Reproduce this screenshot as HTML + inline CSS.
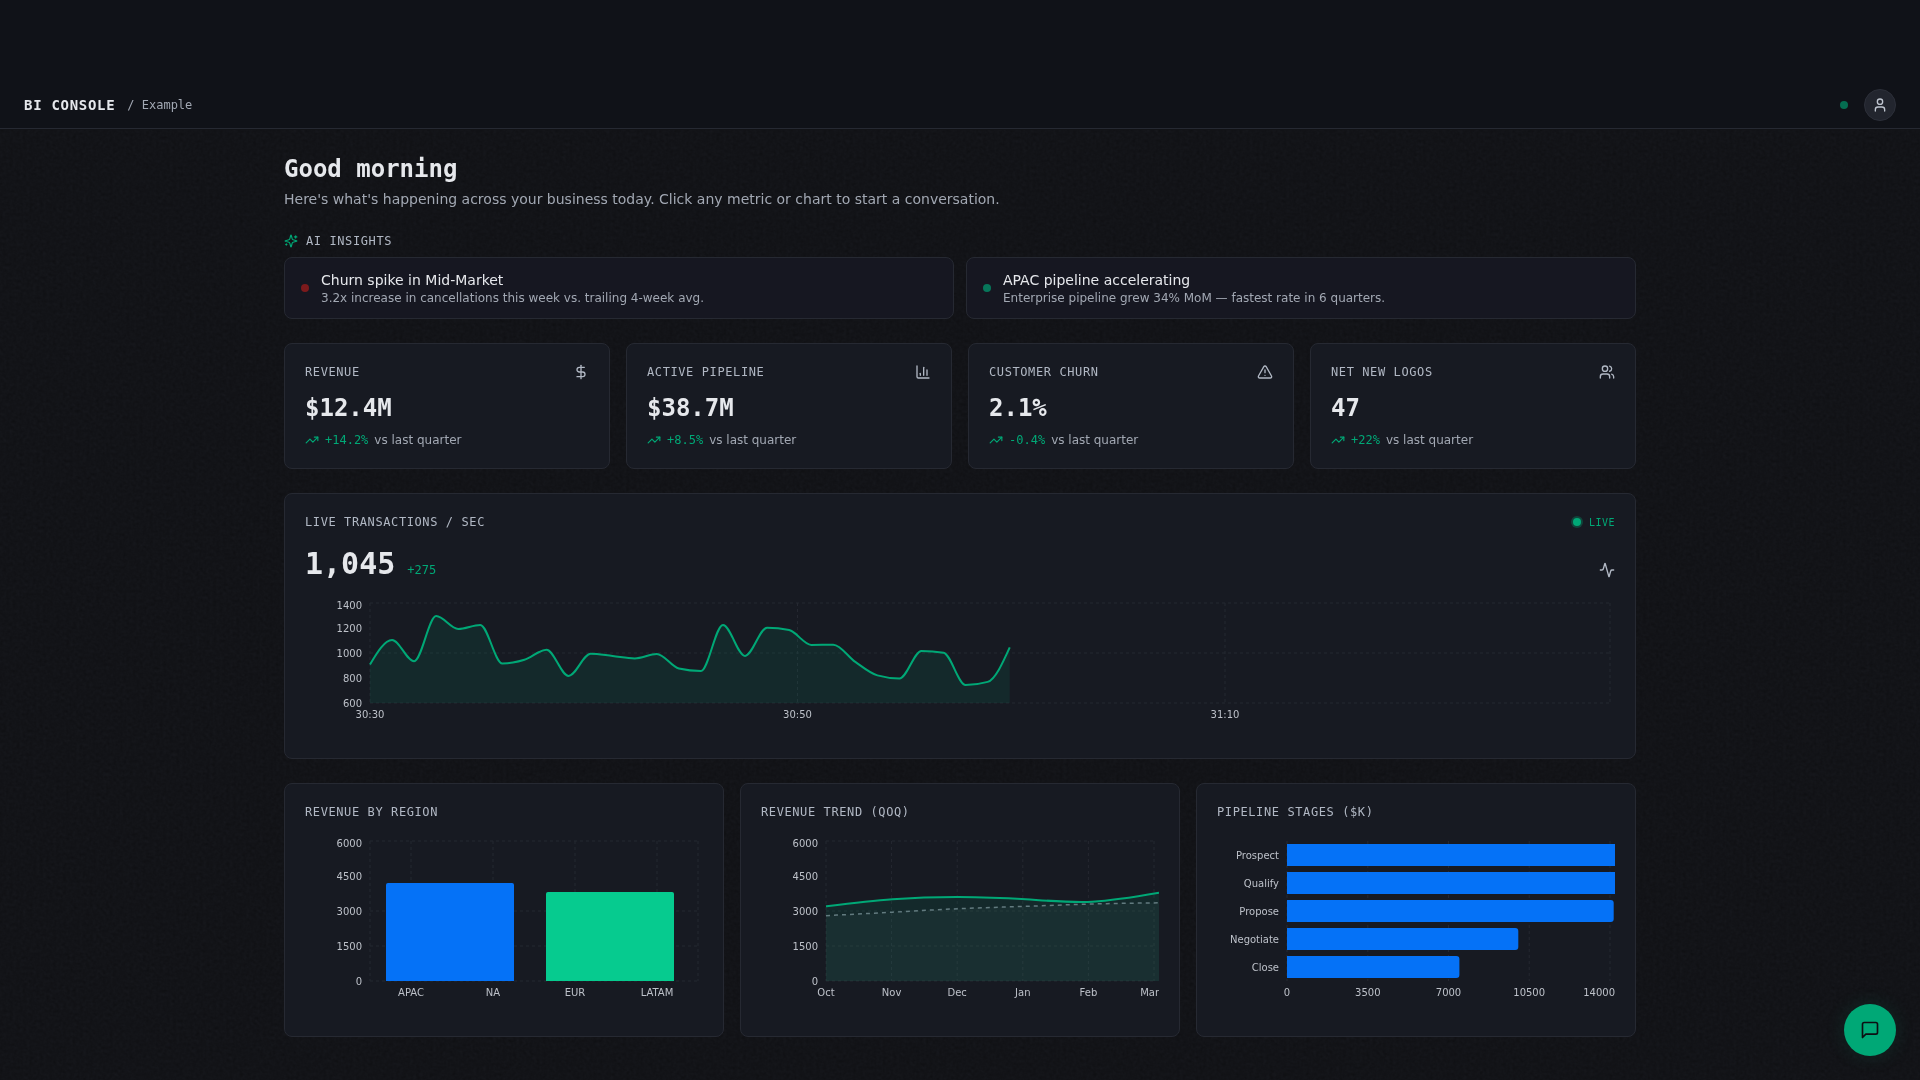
<!DOCTYPE html>
<html lang="en"><head><meta charset="utf-8"><title>BI Console</title>
<style>
*{box-sizing:border-box;margin:0;padding:0}
html,body{width:1920px;height:1080px;overflow:hidden}
body{background:#121317;color:#e6e8ec;font-family:"DejaVu Sans","Liberation Sans",sans-serif;font-size:14px;line-height:20px;position:relative}
.mono{font-family:"DejaVu Sans Mono","Liberation Mono",monospace}
header{will-change:transform;position:absolute;left:0;top:0;width:1920px;height:129px;background:#101218;border-bottom:1px solid #262932}
.brand{position:absolute;left:24px;top:95px;height:20px;display:flex;align-items:center}
.brand b{font-family:"DejaVu Sans Mono","Liberation Mono",monospace;font-size:14px;font-weight:700;letter-spacing:.05em;color:#e6e8ec}
.brand span{font-family:"DejaVu Sans Mono","Liberation Mono",monospace;font-size:12px;color:#a2a8b3;margin-left:12px}
.status{position:absolute;left:1840px;top:101px;width:8px;height:8px;border-radius:50%;background:#056d51}
.avatar{position:absolute;left:1864px;top:89px;width:32px;height:32px;border-radius:50%;background:#22252e;border:1px solid #2c2f39;display:flex;align-items:center;justify-content:center;color:#bfc5cf}
main{will-change:transform;position:absolute;left:284px;top:129px;width:1352px;padding-top:24px}
h1{font-family:"DejaVu Sans Mono","Liberation Mono",monospace;font-size:24px;line-height:32px;font-weight:700;color:#e6e8ec}
.sub{margin-top:4px;font-size:14px;line-height:20px;color:#a2a8b3}
.sect{margin-top:24px;display:flex;align-items:center;height:16px;color:#b1b8c4;font-family:"DejaVu Sans Mono","Liberation Mono",monospace;font-size:12px;line-height:16px;letter-spacing:.05em}
.sect svg{margin-right:8px;color:#00a876}
.card{background:#171a22;border:1px solid #262932;border-radius:8px}
.insights{margin-top:8px;display:flex;gap:12px}
.insight{flex:1;height:62px;padding:0 16px;display:flex;align-items:center;border-radius:8px;background:#161721}
.dot{width:8px;height:8px;border-radius:50%;margin-right:12px;flex:none}
.insight .t{font-size:14px;line-height:20px;color:#e6e8ec}
.insight .d{font-size:12px;line-height:16px;color:#a2a8b3}
.kpis{margin-top:24px;display:flex;gap:16px}
.kpi{flex:1;height:126px;padding:20px}
.kpi .top{display:flex;justify-content:space-between;align-items:center;height:16px;color:#b1b8c4}
.lab{font-family:"DejaVu Sans Mono","Liberation Mono",monospace;font-size:12px;line-height:16px;letter-spacing:.05em;color:#b1b8c4;text-transform:uppercase}
.kpi .val{margin-top:12px;font-family:"DejaVu Sans Mono","Liberation Mono",monospace;font-size:24px;line-height:32px;font-weight:700;color:#e6e8ec}
.kpi .tr{margin-top:8px;display:flex;align-items:center;height:16px;font-size:12px;line-height:16px;color:#a2a8b3}
.kpi .tr svg{color:#00a876;margin-right:6px}
.kpi .tr b{font-family:"DejaVu Sans Mono","Liberation Mono",monospace;font-weight:400;color:#00a876;margin-right:6px}
.live{margin-top:24px;height:266px;padding:20px;position:relative}
.live .head{display:flex;justify-content:space-between;align-items:center;height:16px}
.livetag{display:flex;align-items:center;font-family:"DejaVu Sans Mono","Liberation Mono",monospace;font-size:10px;line-height:16px;letter-spacing:.05em;color:#00a876}
.livetag i{display:block;width:8px;height:8px;border-radius:50%;background:#00a876;box-shadow:0 0 0 2px rgba(0,168,118,.3);margin-right:8px}
.livetag em{font-style:normal;position:relative;top:1px}
.live .num{margin-top:16px;height:36px;display:flex;align-items:baseline;justify-content:flex-start}
.live .num b{font-family:"DejaVu Sans Mono","Liberation Mono",monospace;font-size:30px;line-height:36px;font-weight:700;color:#e6e8ec}
.live .num span{font-family:"DejaVu Sans Mono","Liberation Mono",monospace;font-size:12px;color:#00a876;margin-left:12px}
.live .act{position:absolute;right:20px;top:68px;color:#b1b8c4;height:16px}
.chart{display:block}
.chart text{font-family:"DejaVu Sans","Liberation Sans",sans-serif;font-size:10px;fill:#bdc1c9}
.row3{margin-top:24px;display:flex;gap:16px}
.c3{flex:1;height:254px;padding:20px}
.c3 .chart{margin-top:16px}
.noise{position:absolute;left:0;top:130px;width:1920px;height:950px;opacity:.2;mix-blend-mode:overlay;pointer-events:none}
.fab{position:absolute;left:1844px;top:1004px;width:52px;height:52px;border-radius:50%;background:#00a876;display:flex;align-items:center;justify-content:center;color:#0d0f13;box-shadow:0 0 20px rgba(0,168,118,.15)}
</style></head><body>
<header>
  <div class="brand"><b>BI CONSOLE</b><span>/ Example</span></div>
  <div class="status"></div>
  <div class="avatar"><svg width="16" height="16" viewBox="0 0 24 24" fill="none" stroke="currentColor" stroke-width="2" stroke-linecap="round" stroke-linejoin="round" ><path d="M19 21v-2a4 4 0 0 0-4-4H9a4 4 0 0 0-4 4v2"/><circle cx="12" cy="7" r="4"/></svg></div>
</header>
<svg class="noise" width="1920" height="950"><filter id="nz" color-interpolation-filters="sRGB" x="0" y="0" width="100%" height="100%"><feTurbulence type="fractalNoise" baseFrequency="0.3" numOctaves="2" seed="3" stitchTiles="stitch"/><feColorMatrix type="matrix" values="0.6 0.6 0.6 0 -0.4  0.6 0.6 0.6 0 -0.4  0.6 0.6 0.6 0 -0.4  0 0 0 0 1"/></filter><rect width="1920" height="950" filter="url(#nz)"/></svg>
<main>
  <h1>Good morning</h1>
  <p class="sub">Here's what's happening across your business today. Click any metric or chart to start a conversation.</p>
  <div class="sect"><svg width="14" height="14" viewBox="0 0 24 24" fill="none" stroke="currentColor" stroke-width="2" stroke-linecap="round" stroke-linejoin="round" ><path d="M9.937 15.5A2 2 0 0 0 8.5 14.063l-6.135-1.582a.5.5 0 0 1 0-.962L8.5 9.936A2 2 0 0 0 9.937 8.5l1.582-6.135a.5.5 0 0 1 .963 0L14.063 8.5A2 2 0 0 0 15.5 9.937l6.135 1.581a.5.5 0 0 1 0 .964L15.5 14.063a2 2 0 0 0-1.437 1.437l-1.582 6.135a.5.5 0 0 1-.963 0z"/><path d="M20 3v4"/><path d="M22 5h-4"/><path d="M4 17v2"/><path d="M5 18H3"/></svg><span>AI INSIGHTS</span></div>
  <div class="insights">
    <div class="card insight"><i class="dot" style="background:#7c1a1c"></i><div><div class="t">Churn spike in Mid-Market</div><div class="d">3.2x increase in cancellations this week vs. trailing 4-week avg.</div></div></div>
    <div class="card insight"><i class="dot" style="background:#07765a"></i><div><div class="t">APAC pipeline accelerating</div><div class="d">Enterprise pipeline grew 34% MoM — fastest rate in 6 quarters.</div></div></div>
  </div>
  <div class="kpis"><div class="card kpi"><div class="top"><span class="lab">Revenue</span><svg width="16" height="16" viewBox="0 0 24 24" fill="none" stroke="currentColor" stroke-width="2" stroke-linecap="round" stroke-linejoin="round" ><line x1="12" x2="12" y1="2" y2="22"/><path d="M17 5H9.5a3.5 3.5 0 0 0 0 7h5a3.5 3.5 0 0 1 0 7H6"/></svg></div><div class="val">$12.4M</div><div class="tr"><svg width="14" height="14" viewBox="0 0 24 24" fill="none" stroke="currentColor" stroke-width="2" stroke-linecap="round" stroke-linejoin="round" ><polyline points="22 7 13.5 15.5 8.5 10.5 2 17"/><polyline points="16 7 22 7 22 13"/></svg><b>+14.2%</b><span>vs last quarter</span></div></div><div class="card kpi"><div class="top"><span class="lab">Active pipeline</span><svg width="16" height="16" viewBox="0 0 24 24" fill="none" stroke="currentColor" stroke-width="2" stroke-linecap="round" stroke-linejoin="round" ><path d="M3 3v16a2 2 0 0 0 2 2h16"/><path d="M18 17V9"/><path d="M13 17V5"/><path d="M8 17v-3"/></svg></div><div class="val">$38.7M</div><div class="tr"><svg width="14" height="14" viewBox="0 0 24 24" fill="none" stroke="currentColor" stroke-width="2" stroke-linecap="round" stroke-linejoin="round" ><polyline points="22 7 13.5 15.5 8.5 10.5 2 17"/><polyline points="16 7 22 7 22 13"/></svg><b>+8.5%</b><span>vs last quarter</span></div></div><div class="card kpi"><div class="top"><span class="lab">Customer churn</span><svg width="16" height="16" viewBox="0 0 24 24" fill="none" stroke="currentColor" stroke-width="2" stroke-linecap="round" stroke-linejoin="round" ><path d="m21.73 18-8-14a2 2 0 0 0-3.48 0l-8 14A2 2 0 0 0 4 21h16a2 2 0 0 0 1.73-3"/><path d="M12 9v4"/><path d="M12 17h.01"/></svg></div><div class="val">2.1%</div><div class="tr"><svg width="14" height="14" viewBox="0 0 24 24" fill="none" stroke="currentColor" stroke-width="2" stroke-linecap="round" stroke-linejoin="round" ><polyline points="22 7 13.5 15.5 8.5 10.5 2 17"/><polyline points="16 7 22 7 22 13"/></svg><b>-0.4%</b><span>vs last quarter</span></div></div><div class="card kpi"><div class="top"><span class="lab">Net new logos</span><svg width="16" height="16" viewBox="0 0 24 24" fill="none" stroke="currentColor" stroke-width="2" stroke-linecap="round" stroke-linejoin="round" ><path d="M16 21v-2a4 4 0 0 0-4-4H6a4 4 0 0 0-4 4v2"/><circle cx="9" cy="7" r="4"/><path d="M22 21v-2a4 4 0 0 0-3-3.87"/><path d="M16 3.13a4 4 0 0 1 0 7.75"/></svg></div><div class="val">47</div><div class="tr"><svg width="14" height="14" viewBox="0 0 24 24" fill="none" stroke="currentColor" stroke-width="2" stroke-linecap="round" stroke-linejoin="round" ><polyline points="22 7 13.5 15.5 8.5 10.5 2 17"/><polyline points="16 7 22 7 22 13"/></svg><b>+22%</b><span>vs last quarter</span></div></div></div>
  <div class="card live">
    <div class="head"><span class="lab">Live transactions / sec</span><span class="livetag"><i></i><em>LIVE</em></span></div>
    <div class="num"><b>1,045</b><span>+275</span></div>
    <div class="act"><svg width="16" height="16" viewBox="0 0 24 24" fill="none" stroke="currentColor" stroke-width="2" stroke-linecap="round" stroke-linejoin="round" ><path d="M22 12h-2.48a2 2 0 0 0-1.93 1.46l-2.35 8.36a.25.25 0 0 1-.48 0L9.24 2.18a.25.25 0 0 0-.48 0l-2.35 8.36A2 2 0 0 1 4.49 12H2"/></svg></div>
    <svg class="chart" width="1310" height="140" viewBox="0 0 1310 140" style="margin-top:16px"><g stroke="#252831" stroke-dasharray="3 3" stroke-width="1" fill="none"><line x1="65" y1="5" x2="1305" y2="5"/><line x1="65" y1="55" x2="1305" y2="55"/><line x1="65" y1="105" x2="1305" y2="105"/><line x1="65" y1="5" x2="65" y2="105"/><line x1="492.5" y1="5" x2="492.5" y2="105"/><line x1="920" y1="5" x2="920" y2="105"/><line x1="1305" y1="5" x2="1305" y2="105"/></g><path d="M65.00,66.40C72.35,54.20,79.71,42.00,87.06,42.00C94.41,42.00,101.77,63.25,109.12,63.25C116.47,63.25,123.83,18.10,131.18,18.10C138.53,18.10,145.89,31.00,153.24,31.00C160.59,31.00,167.95,27.00,175.30,27.00C182.65,27.00,190.01,65.50,197.36,65.50C204.71,65.50,212.07,64.04,219.42,61.75C226.77,59.46,234.13,51.75,241.48,51.75C248.83,51.75,256.19,77.90,263.54,77.90C270.89,77.90,278.25,55.75,285.60,55.75C292.95,55.75,300.31,57.23,307.66,58.00C315.01,58.77,322.37,60.40,329.72,60.40C337.07,60.40,344.43,56.00,351.78,56.00C359.13,56.00,366.49,68.83,373.84,70.50C381.19,72.17,388.55,73.00,395.90,73.00C403.25,73.00,410.61,27.00,417.96,27.00C425.31,27.00,432.67,57.90,440.02,57.90C447.37,57.90,454.73,29.75,462.08,29.75C469.43,29.75,476.79,30.50,484.14,32.00C491.49,33.50,498.85,46.90,506.20,46.90C513.55,46.90,520.91,46.75,528.26,46.75C535.61,46.75,542.97,58.79,550.32,63.90C557.67,69.01,565.03,75.33,572.38,77.40C579.73,79.47,587.09,80.50,594.44,80.50C601.79,80.50,609.15,53.00,616.50,53.00C623.85,53.00,631.21,53.58,638.56,54.75C645.91,55.92,653.27,87.00,660.62,87.00C667.97,87.00,675.33,85.97,682.68,83.90C690.03,81.83,697.39,65.62,704.74,49.40L704.74,105.00 L65.00,105.00 Z" fill="#00a876" fill-opacity="0.11"/><path d="M65.00,66.40C72.35,54.20,79.71,42.00,87.06,42.00C94.41,42.00,101.77,63.25,109.12,63.25C116.47,63.25,123.83,18.10,131.18,18.10C138.53,18.10,145.89,31.00,153.24,31.00C160.59,31.00,167.95,27.00,175.30,27.00C182.65,27.00,190.01,65.50,197.36,65.50C204.71,65.50,212.07,64.04,219.42,61.75C226.77,59.46,234.13,51.75,241.48,51.75C248.83,51.75,256.19,77.90,263.54,77.90C270.89,77.90,278.25,55.75,285.60,55.75C292.95,55.75,300.31,57.23,307.66,58.00C315.01,58.77,322.37,60.40,329.72,60.40C337.07,60.40,344.43,56.00,351.78,56.00C359.13,56.00,366.49,68.83,373.84,70.50C381.19,72.17,388.55,73.00,395.90,73.00C403.25,73.00,410.61,27.00,417.96,27.00C425.31,27.00,432.67,57.90,440.02,57.90C447.37,57.90,454.73,29.75,462.08,29.75C469.43,29.75,476.79,30.50,484.14,32.00C491.49,33.50,498.85,46.90,506.20,46.90C513.55,46.90,520.91,46.75,528.26,46.75C535.61,46.75,542.97,58.79,550.32,63.90C557.67,69.01,565.03,75.33,572.38,77.40C579.73,79.47,587.09,80.50,594.44,80.50C601.79,80.50,609.15,53.00,616.50,53.00C623.85,53.00,631.21,53.58,638.56,54.75C645.91,55.92,653.27,87.00,660.62,87.00C667.97,87.00,675.33,85.97,682.68,83.90C690.03,81.83,697.39,65.62,704.74,49.40" fill="none" stroke="#00a876" stroke-width="2"/><text x="57" y="7" text-anchor="end" dy="0.355em">1400</text><text x="57" y="30" text-anchor="end" dy="0.355em">1200</text><text x="57" y="55" text-anchor="end" dy="0.355em">1000</text><text x="57" y="80" text-anchor="end" dy="0.355em">800</text><text x="57" y="105" text-anchor="end" dy="0.355em">600</text><text x="65" y="120" text-anchor="middle">30:30</text><text x="492.5" y="120" text-anchor="middle">30:50</text><text x="920" y="120" text-anchor="middle">31:10</text></svg>
  </div>
  <div class="row3">
    <div class="card c3"><div class="lab">Revenue by region</div><svg class="chart" width="398" height="180" viewBox="0 0 398 180"><g stroke="#252831" stroke-dasharray="3 3" stroke-width="1" fill="none"><line x1="65" y1="5" x2="393" y2="5"/><line x1="65" y1="75" x2="393" y2="75"/><line x1="65" y1="110" x2="393" y2="110"/><line x1="65" y1="145" x2="393" y2="145"/><line x1="65" y1="5" x2="65" y2="145"/><line x1="106" y1="5" x2="106" y2="145"/><line x1="188" y1="5" x2="188" y2="145"/><line x1="270" y1="5" x2="270" y2="145"/><line x1="352" y1="5" x2="352" y2="145"/><line x1="393" y1="5" x2="393" y2="145"/></g><path d="M81,145V49q0,-2 2,-2H207q2,0 2,2V145Z" fill="#0572f7"/><path d="M241,145V58q0,-2 2,-2H367q2,0 2,2V145Z" fill="#06cb8f"/><text x="57" y="7" text-anchor="end" dy="0.355em">6000</text><text x="57" y="40" text-anchor="end" dy="0.355em">4500</text><text x="57" y="75" text-anchor="end" dy="0.355em">3000</text><text x="57" y="110" text-anchor="end" dy="0.355em">1500</text><text x="57" y="145" text-anchor="end" dy="0.355em">0</text><text x="106" y="160" text-anchor="middle">APAC</text><text x="188" y="160" text-anchor="middle">NA</text><text x="270" y="160" text-anchor="middle">EUR</text><text x="352" y="160" text-anchor="middle">LATAM</text></svg></div>
    <div class="card c3"><div class="lab">Revenue trend (QoQ)</div><svg class="chart" width="398" height="180" viewBox="0 0 398 180"><g stroke="#252831" stroke-dasharray="3 3" stroke-width="1" fill="none"><line x1="65" y1="5" x2="393" y2="5"/><line x1="65" y1="75" x2="393" y2="75"/><line x1="65" y1="110" x2="393" y2="110"/><line x1="65" y1="145" x2="393" y2="145"/><line x1="65.0" y1="5" x2="65.0" y2="145"/><line x1="130.6" y1="5" x2="130.6" y2="145"/><line x1="196.2" y1="5" x2="196.2" y2="145"/><line x1="261.8" y1="5" x2="261.8" y2="145"/><line x1="327.4" y1="5" x2="327.4" y2="145"/><line x1="393.0" y1="5" x2="393.0" y2="145"/></g><path d="M65.00,79.67C87.20,78.53,109.40,77.39,131.60,76.17C153.80,74.94,176.00,73.62,198.20,72.67C220.40,71.71,242.60,71.11,264.80,70.33C287.00,69.56,309.20,68.61,331.40,68.00C353.60,67.39,375.80,67.11,398.00,66.83L398.00,145L65.00,145Z" fill="#8b93a1" fill-opacity="0.06"/><path d="M65.00,79.67C87.20,78.53,109.40,77.39,131.60,76.17C153.80,74.94,176.00,73.62,198.20,72.67C220.40,71.71,242.60,71.11,264.80,70.33C287.00,69.56,309.20,68.61,331.40,68.00C353.60,67.39,375.80,67.11,398.00,66.83" fill="none" stroke="#6f7681" stroke-width="1.5" stroke-dasharray="4 4"/><path d="M65.00,70.33C87.20,67.68,109.40,65.02,131.60,63.33C153.80,61.65,176.00,60.93,198.20,61.00C220.40,61.07,242.60,61.94,264.80,63.33C287.00,64.73,309.20,66.66,331.40,65.67C353.60,64.67,375.80,60.76,398.00,56.85L398.00,145L65.00,145Z" fill="#00a876" fill-opacity="0.11"/><path d="M65.00,70.33C87.20,67.68,109.40,65.02,131.60,63.33C153.80,61.65,176.00,60.93,198.20,61.00C220.40,61.07,242.60,61.94,264.80,63.33C287.00,64.73,309.20,66.66,331.40,65.67C353.60,64.67,375.80,60.76,398.00,56.85" fill="none" stroke="#00a876" stroke-width="2"/><text x="57" y="7" text-anchor="end" dy="0.355em">6000</text><text x="57" y="40" text-anchor="end" dy="0.355em">4500</text><text x="57" y="75" text-anchor="end" dy="0.355em">3000</text><text x="57" y="110" text-anchor="end" dy="0.355em">1500</text><text x="57" y="145" text-anchor="end" dy="0.355em">0</text><text x="65.0" y="160" text-anchor="middle">Oct</text><text x="130.6" y="160" text-anchor="middle">Nov</text><text x="196.2" y="160" text-anchor="middle">Dec</text><text x="261.8" y="160" text-anchor="middle">Jan</text><text x="327.4" y="160" text-anchor="middle">Feb</text><text x="398" y="160" text-anchor="end">Mar</text></svg></div>
    <div class="card c3"><div class="lab">Pipeline stages ($K)</div><svg class="chart" width="398" height="180" viewBox="0 0 398 180"><g stroke="#252831" stroke-dasharray="3 3" stroke-width="1" fill="none"><line x1="70.0" y1="5" x2="70.0" y2="145"/><line x1="150.8" y1="5" x2="150.8" y2="145"/><line x1="231.5" y1="5" x2="231.5" y2="145"/><line x1="312.2" y1="5" x2="312.2" y2="145"/><line x1="393.0" y1="5" x2="393.0" y2="145"/></g><rect x="70" y="8" width="328" height="22" fill="#0572f7"/><rect x="70" y="36" width="328" height="22" fill="#0572f7"/><path d="M70,64H393.7q3,0 3,3V83q0,3 -3,3H70Z" fill="#0572f7"/><path d="M70,92H298.3q3,0 3,3V111q0,3 -3,3H70Z" fill="#0572f7"/><path d="M70,120H239.4q3,0 3,3V139q0,3 -3,3H70Z" fill="#0572f7"/><text x="62" y="19" text-anchor="end" dy="0.355em">Prospect</text><text x="62" y="47" text-anchor="end" dy="0.355em">Qualify</text><text x="62" y="75" text-anchor="end" dy="0.355em">Propose</text><text x="62" y="103" text-anchor="end" dy="0.355em">Negotiate</text><text x="62" y="131" text-anchor="end" dy="0.355em">Close</text><text x="70.0" y="160" text-anchor="middle">0</text><text x="150.8" y="160" text-anchor="middle">3500</text><text x="231.5" y="160" text-anchor="middle">7000</text><text x="312.2" y="160" text-anchor="middle">10500</text><text x="398" y="160" text-anchor="end">14000</text></svg></div>
  </div>
</main>
<div class="fab"><svg width="20" height="20" viewBox="0 0 24 24" fill="none" stroke="currentColor" stroke-width="2" stroke-linecap="round" stroke-linejoin="round" ><path d="M21 15a2 2 0 0 1-2 2H7l-4 4V5a2 2 0 0 1 2-2h14a2 2 0 0 1 2 2z"/></svg></div>
</body></html>
